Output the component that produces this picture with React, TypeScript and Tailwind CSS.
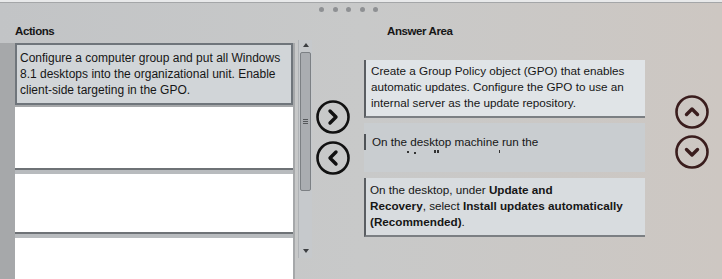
import React from 'react';

const Circle = ({ dir, color }: { dir: 'right' | 'left' | 'up' | 'down'; color: string }) => {
    const paths: Record<string, string> = {
        right: 'M14 11 L20 17 L14 23',
        left: 'M20 11 L14 17 L20 23',
        up: 'M11.5 19.5 L17 14 L22.5 19.5',
        down: 'M11.5 14.5 L17 20 L22.5 14.5',
    };
    return (
        <svg width="34" height="34" viewBox="0 0 34 34" className="block">
            <circle cx="17" cy="17" r="15.5" fill="none" stroke={color} strokeWidth="2.6" />
            <path d={paths[dir]} fill="none" stroke={color} strokeWidth="3.4" strokeLinecap="round" strokeLinejoin="round" />
        </svg>
    );
};

const Band = () => <div className="h-[6px] shrink-0 bg-[#b8bbbe] border-t-2 border-[#6e7276]" />;

export default function App() {
    return (
        <div className="w-[722px] h-[279px] overflow-hidden flex flex-col bg-gradient-to-r from-[#c2c4c6] via-[#c8c9c9] to-[#cdc7c2] font-['Liberation_Sans',Arial,sans-serif] text-[#161616]">
            <div className="h-[3px] shrink-0 bg-[#e8e9ea] border-b border-[#a4a6a8]" />
            <div className="h-[13px] shrink-0 flex items-center gap-[8.5px] pl-[319px]">
                {[0, 1, 2, 3, 4].map((i) => (
                    <div key={i} className="w-[5px] h-[5px] rounded-full bg-[#8e9093]" />
                ))}
            </div>

            <div className="flex flex-1 min-h-0">
                {/* actions */}
                <div className="w-[295px] shrink-0 flex flex-col">
                    <div className="h-[27px] shrink-0 pl-[15px] pt-[9px] text-[11.5px] leading-[13px] font-bold tracking-[-0.4px]">Actions</div>
                    <div className="flex-1 min-h-0 bg-[#a6a8aa] pl-[15px] pr-[2px] flex flex-col">
                        <div className="h-[62px] shrink-0 bg-[#d1d5d8] border-2 border-[#6f757b] pl-[3px] pt-[5px] text-[12px] leading-[16px] whitespace-nowrap">
                            Configure a computer group and put all Windows
                            <br />
                            8.1 desktops into the organizational unit. Enable
                            <br />
                            client-side targeting in the GPO.
                        </div>
                        <div className="h-[2px] shrink-0" />
                        <div className="h-[61px] shrink-0 bg-white" />
                        <Band />
                        <div className="h-[58px] shrink-0 bg-white" />
                        <Band />
                        <div className="flex-1 bg-white" />
                    </div>
                </div>

                {/* scrollbar */}
                <div className="w-[14px] shrink-0 ml-[3px] mt-[24px] h-[218px] bg-[#c6c9cc] border-l border-[#b0b3b6] flex flex-col items-center">
                    <div className="mt-[3px] w-0 h-0 border-l-[3px] border-r-[3px] border-b-[4px] border-l-transparent border-r-transparent border-b-[#3c3f42]" />
                    <div className="mt-[5px] w-[11px] h-[139px] rounded-[2px] bg-[#aaadb1] border border-[#7c8084] flex items-center justify-center">
                        <div className="flex flex-col gap-[1px]">
                            <div className="w-[5px] h-[1px] bg-[#55585b]" />
                            <div className="w-[5px] h-[1px] bg-[#55585b]" />
                            <div className="w-[5px] h-[1px] bg-[#55585b]" />
                        </div>
                    </div>
                    <div className="mt-auto mb-[5px] w-0 h-0 border-l-[3px] border-r-[3px] border-t-[4px] border-l-transparent border-r-transparent border-t-[#3c3f42]" />
                </div>

                {/* move buttons */}
                <div className="w-[52px] shrink-0 pl-[4px] pt-[84px] flex flex-col gap-[7px]">
                    <Circle dir="right" color="#111" />
                    <Circle dir="left" color="#111" />
                </div>

                {/* answer area */}
                <div className="w-[281px] shrink-0 flex flex-col">
                    <div className="h-[44px] shrink-0 pl-[23px] pt-[9px] text-[11.5px] leading-[13px] font-bold tracking-[-0.4px]">Answer Area</div>
                    <div className="h-[58px] shrink-0 bg-[#e0e4e7] border-l-2 border-b-2 border-l-[#5a5e62] border-b-[#7b7f83] pl-[5px] pt-[3px] text-[11.7px] leading-[16px] whitespace-nowrap">
                        Create a Group Policy object (GPO) that enables
                        <br />
                        automatic updates. Configure the GPO to use an
                        <br />
                        internal server as the update repository.
                    </div>
                    <div className="h-[5px] shrink-0" />
                    <div className="h-[49px] shrink-0 bg-[#c9cdd0] pt-[11px] text-[11.7px] leading-[16px] flex flex-col">
                        <div className="border-l-2 border-[#4f5357] pl-[6px]">On the desktop machine run the</div>
                        <div className="h-[8px] flex items-start pl-[43px] gap-[5px]">
                            <div className="w-[2px] h-[2px] mt-[1px] bg-[#333]" />
                            <div className="w-[2px] h-[2px] mt-[2px] bg-[#333]" />
                            <div className="w-[5px] h-[3px] ml-[13px] border-x-2 border-[#333]" />
                            <div className="w-[1px] h-[3px] ml-[55px] bg-[#333]" />
                        </div>
                    </div>
                    <div className="h-[6px] shrink-0" />
                    <div className="h-[59px] shrink-0 bg-[#d8dcdf] border-l-2 border-b-2 border-l-[#5a5e62] border-b-[#7b7f83] pl-[4px] pt-[4px] text-[11.7px] leading-[16px] whitespace-nowrap">
                        On the desktop, under <b>Update and</b>
                        <br />
                        <b>Recovery</b>, select <b>Install updates automatically</b>
                        <br />
                        <b>(Recommended)</b>.
                    </div>
                </div>

                {/* reorder buttons */}
                <div className="flex-1 pl-[30px] pt-[79px] flex flex-col gap-[6px]">
                    <Circle dir="up" color="#3a1d1d" />
                    <Circle dir="down" color="#3a1d1d" />
                </div>
            </div>
        </div>
    );
}
